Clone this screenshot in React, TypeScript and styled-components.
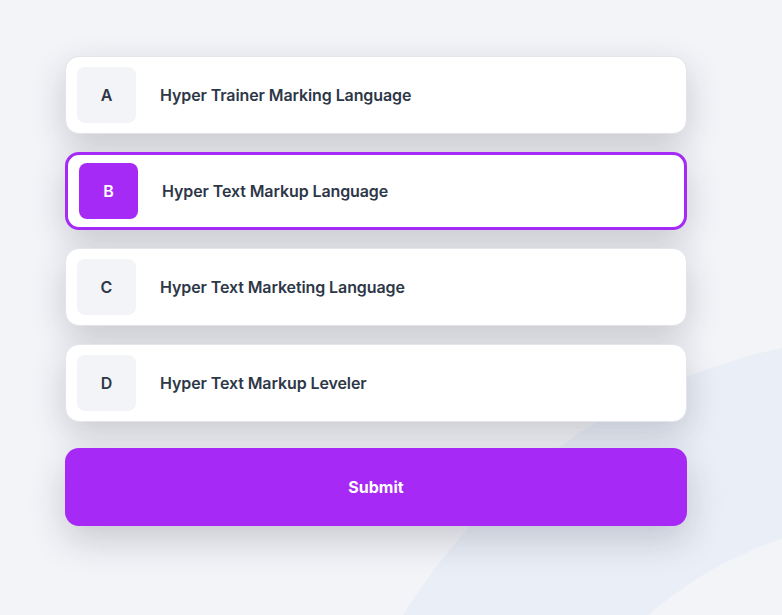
import { FC, useState } from 'react';
import { createGlobalStyle, styled } from 'styled-components';

const GlobalStyle = createGlobalStyle`
  html, body {
    margin: 0;
    padding: 0;
    background: #f3f4f8;
    font-family: 'Inter', 'Noto Sans', sans-serif;
  }
`;

const Page = styled.div`
  position: relative;
  width: 782px;
  height: 615px;
  overflow: hidden;
  background: #f3f4f8;
`;

const Backdrop = styled.svg`
  position: absolute;
  inset: 0;
  pointer-events: none;
`;

const Quiz = styled.div`
  position: relative;
  width: 622px;
  padding: 56px 0 0 65px;
  display: flex;
  flex-direction: column;
  gap: 18px;
`;

const OptionCard = styled.button<{ $selected: boolean }>`
  display: flex;
  align-items: center;
  gap: 24px;
  height: 78px;
  box-sizing: border-box;
  padding: 0 11px;
  background: #fff;
  border: ${({ $selected }) => ($selected ? '3px solid #a62af5' : '1px solid #e4e5ea')};
  border-radius: 14px;
  box-shadow: 0 12px 34px rgba(30, 34, 50, 0.2);
  font-family: inherit;
  text-align: left;
  cursor: pointer;
`;

const Letter = styled.span<{ $selected: boolean }>`
  display: flex;
  align-items: center;
  justify-content: center;
  flex: none;
  width: 59px;
  height: 56px;
  border-radius: 8px;
  background: ${({ $selected }) => ($selected ? '#a62af5' : '#f3f4f8')};
  color: ${({ $selected }) => ($selected ? '#fff' : '#2d3748')};
  font-size: 16px;
  font-weight: 600;
`;

const OptionText = styled.span`
  font-size: 16px;
  font-weight: 600;
  color: #2d3748;
  letter-spacing: -0.1px;
`;

const SubmitButton = styled.button`
  margin-top: 8px;
  height: 78px;
  border: none;
  border-radius: 14px;
  background: #a729f5;
  color: #fff;
  font-family: inherit;
  font-size: 16px;
  font-weight: 700;
  box-shadow: 0 14px 36px rgba(30, 34, 50, 0.2);
  cursor: pointer;
`;

const options = [
  { key: 'A', text: 'Hyper Trainer Marking Language' },
  { key: 'B', text: 'Hyper Text Markup Language' },
  { key: 'C', text: 'Hyper Text Marketing Language' },
  { key: 'D', text: 'Hyper Text Markup Leveler' },
];

const App: FC = () => {
  const [selected, setSelected] = useState('B');
  return (
    <Page>
      <GlobalStyle />
      <Backdrop width="782" height="615" viewBox="0 0 782 615">
        <circle cx="905" cy="925" r="590" fill="#eaeef7" />
        <circle cx="900" cy="900" r="380" fill="#f3f4f8" />
      </Backdrop>
      <Quiz>
        {options.map((o) => (
          <OptionCard key={o.key} $selected={selected === o.key} onClick={() => setSelected(o.key)}>
            <Letter $selected={selected === o.key}>{o.key}</Letter>
            <OptionText>{o.text}</OptionText>
          </OptionCard>
        ))}
        <SubmitButton>Submit</SubmitButton>
      </Quiz>
    </Page>
  );
};

export default App;
